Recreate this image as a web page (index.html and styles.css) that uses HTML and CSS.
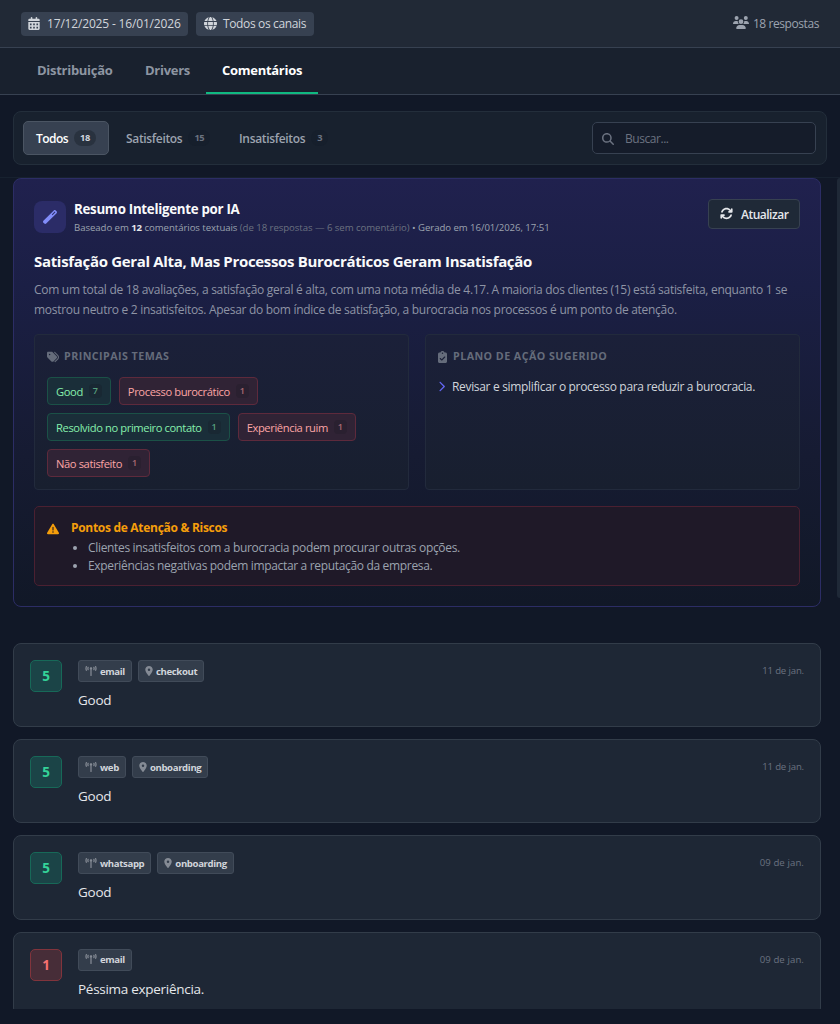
FILE: index.html
```
<!DOCTYPE html>
<html lang="pt-BR">
<head>
<meta charset="utf-8">
<title>Comentários</title>
<link rel="stylesheet" href="styles.css">
</head>
<body>
<svg class="sprite" aria-hidden="true">
  <symbol id="calendar" viewBox="0 0 448 512"><path fill-rule="evenodd" d="M128 0c17.700 0 32 14.300 32 32V64H288V32c0-17.700 14.300-32 32-32s32 14.300 32 32V64h48c26.500 0 48 21.500 48 48v48H0V112C0 85.500 21.500 64 48 64H96V32c0-17.700 14.300-32 32-32zM0 192H448V464c0 26.500-21.500 48-48 48H48c-26.500 0-48-21.500-48-48V192zM64 256v64h64v-64zM192 256v64h64v-64zM320 256v64h64v-64zM64 384v64h64v-64zM192 384v64h64v-64zM320 384v64h64v-64z"/></symbol>
  <symbol id="globe" viewBox="0 0 512 512"><path d="M352 256c0 22.200-1.200 43.600-3.300 64H163.300c-2.200-20.400-3.300-41.800-3.300-64s1.200-43.600 3.300-64H348.700c2.200 20.400 3.300 41.800 3.300 64zm28.800-64H503.900c5.300 20.500 8.100 41.900 8.100 64s-2.800 43.500-8.100 64H380.800c2.100-20.600 3.200-42 3.200-64s-1.100-43.400-3.200-64zm112.600-32H376.700c-10-63.900-29.800-117.400-55.300-151.600c78.300 20.700 142 77.500 171.900 151.600zm-149.100 0H167.700c6.100-36.400 15.500-68.600 27-94.700c10.500-23.600 22.200-40.700 33.500-51.500C239.400 3.200 248.700 0 256 0s16.600 3.200 27.800 13.800c11.300 10.800 23 27.900 33.500 51.500c11.600 26 20.900 58.200 27 94.700zm-209 0H18.600C48.600 85.900 112.200 29.100 190.600 8.400C165.100 42.600 145.300 96.100 135.300 160zM8.100 192H131.200c-2.100 20.600-3.200 42-3.200 64s1.100 43.400 3.200 64H8.100C2.800 299.500 0 278.100 0 256s2.800-43.500 8.100-64zM194.700 446.600c-11.600-26-20.900-58.200-27-94.600H344.300c-6.100 36.400-15.500 68.600-27 94.600c-10.500 23.600-22.200 40.700-33.500 51.500C272.600 508.800 263.300 512 256 512s-16.600-3.200-27.800-13.800c-11.300-10.800-23-27.900-33.500-51.500zM135.300 352c10 63.900 29.800 117.400 55.300 151.600C112.200 482.900 48.600 426.100 18.600 352H135.300zm358.100 0c-30 74.100-93.600 130.900-171.900 151.600c25.500-34.200 45.200-87.700 55.300-151.600H493.400z"/></symbol>
  <symbol id="users" viewBox="0 0 640 512"><path d="M144 0a80 80 0 1 1 0 160A80 80 0 1 1 144 0zM512 0a80 80 0 1 1 0 160A80 80 0 1 1 512 0zM0 298.700C0 239.800 47.800 192 106.700 192h42.700c15.900 0 31 3.500 44.600 9.700c-1.300 7.200-1.900 14.700-1.900 22.300c0 38.200 16.800 72.500 43.300 96H21.300C9.600 320 0 310.400 0 298.700zM405.300 320c26.600-23.500 43.300-57.800 43.300-96c0-7.600-.7-15-1.900-22.300c13.600-6.300 28.700-9.700 44.600-9.700h42.700C592.200 192 640 239.800 640 298.700c0 11.800-9.600 21.300-21.300 21.300H405.300zM224 224a96 96 0 1 1 192 0 96 96 0 1 1 -192 0zM128 485.300C128 411.700 187.700 352 261.300 352H378.700C452.300 352 512 411.700 512 485.300c0 14.700-11.900 26.700-26.700 26.700H154.700c-14.700 0-26.700-11.900-26.700-26.700z"/></symbol>
  <symbol id="search" viewBox="0 0 512 512"><path d="M416 208c0 45.900-14.900 88.300-40 122.700L502.600 457.400c12.500 12.500 12.500 32.800 0 45.300s-32.800 12.500-45.300 0L330.700 376c-34.400 25.200-76.800 40-122.700 40C93.100 416 0 322.900 0 208S93.100 0 208 0S416 93.100 416 208zM208 352a144 144 0 1 0 0-288 144 144 0 1 0 0 288z"/></symbol>
  <symbol id="sync" viewBox="0 0 512 512"><path d="M105.100 202.600c7.700-21.800 20.200-42.300 37.800-59.800c62.500-62.500 163.800-62.500 226.300 0L386.300 160H352c-17.700 0-32 14.300-32 32s14.300 32 32 32H463.900c17.700 0 32-14.300 32-32V80c0-17.700-14.300-32-32-32s-32 14.300-32 32v35.200L414.400 97.600c-87.500-87.500-229.300-87.500-316.800 0C73.200 122 55.600 150.700 44.800 181.400c-5.900 16.700 2.900 34.900 19.500 40.800s34.900-2.900 40.800-19.500zM39 289.300c-5 1.500-9.800 4.200-13.700 8.200c-4 4-6.700 8.800-8.100 14c-.3 1.200-.6 2.500-.8 3.800c-.3 1.700-.4 3.400-.4 5.100V432c0 17.700 14.300 32 32 32s32-14.300 32-32V396.900l17.600 17.500c87.500 87.400 229.300 87.400 316.700 0c24.400-24.400 42.100-53.100 52.900-83.800c5.900-16.700-2.900-34.900-19.500-40.800s-34.900 2.900-40.800 19.500c-7.700 21.800-20.200 42.300-37.800 59.800c-62.500 62.500-163.800 62.500-226.300 0L125.600 352H160c17.700 0 32-14.300 32-32s-14.300-32-32-32H48.400c-1.600 0-3.200 .1-4.800 .3s-3.100 .5-4.600 1z"/></symbol>
  <symbol id="wand" viewBox="0 0 512 512"><path d="M14.100 463.300c-18.700-18.700-18.700-49.100 0-67.900L395.400 14.100c18.700-18.700 49.100-18.700 67.900 0l34.600 34.600c18.700 18.700 18.700 49.100 0 67.900L116.500 497.900c-18.700 18.700-49.100 18.700-67.900 0L14.100 463.300zM347.600 187.600l105-105L429.400 59.300l-105 105 23.300 23.300z"/></symbol>
  <symbol id="tags" viewBox="0 0 512 512"><path d="M345 39.100L472.800 168.400c52.400 53 52.400 138.200 0 191.200L360.800 472.900c-9.300 9.400-24.500 9.500-33.900 .2s-9.500-24.500-.2-33.900L438.600 325.900c33.900-34.300 33.900-89.400 0-123.700L310.900 72.900c-9.300-9.400-9.200-24.600 .2-33.900s24.600-9.200 33.900 .2zM0 229.500V80C0 53.500 21.500 32 48 32H197.500c17 0 33.300 6.700 45.300 18.700l168 168c25 25 25 65.500 0 90.500L277.300 442.700c-25 25-65.500 25-90.500 0l-168-168C6.700 262.700 0 246.500 0 229.500zM144 144a32 32 0 1 0 -64 0 32 32 0 1 0 64 0z"/></symbol>
  <symbol id="clipboard" viewBox="0 0 384 512"><path fill-rule="evenodd" d="M192 0c-41.800 0-77.400 26.700-90.500 64H64C28.700 64 0 92.700 0 128V448c0 35.300 28.700 64 64 64H320c35.300 0 64-28.700 64-64V128c0-35.300-28.700-64-64-64H282.500C269.400 26.700 233.800 0 192 0zm0 64a32 32 0 1 1 0 64 32 32 0 1 1 0-64zM305 273L177 401c-9.400 9.400-24.600 9.400-33.900 0L79 337c-9.400-9.400-9.400-24.600 0-33.900s24.600-9.400 33.900 0l47 47L271 239c9.400-9.400 24.600-9.400 33.900 0s9.400 24.600 0 33.900z"/></symbol>
  <symbol id="chevron" viewBox="0 0 320 512"><path d="M310.600 233.400c12.500 12.500 12.500 32.800 0 45.300l-192 192c-12.500 12.500-32.800 12.500-45.300 0s-12.500-32.800 0-45.300L242.700 256 73.400 86.600c-12.500-12.500-12.500-32.800 0-45.300s32.800-12.500 45.300 0l192 192z"/></symbol>
  <symbol id="warning" viewBox="0 0 512 512"><path fill-rule="evenodd" d="M256 32c14.200 0 27.300 7.500 34.500 19.800l216 368c7.300 12.400 7.300 27.700 .2 40.100S486.300 480 472 480H40c-14.300 0-27.600-7.700-34.700-20.100s-7-27.800 .2-40.100l216-368C228.700 39.500 241.800 32 256 32zm0 128c-13.300 0-24 10.700-24 24V296c0 13.300 10.700 24 24 24s24-10.700 24-24V184c0-13.300-10.700-24-24-24zm32 224a32 32 0 1 0 -64 0 32 32 0 1 0 64 0z"/></symbol>
  <symbol id="pin" viewBox="0 0 384 512"><path fill-rule="evenodd" d="M215.700 499.200C267 435 384 279.400 384 192C384 86 298 0 192 0S0 86 0 192c0 87.400 117 243 168.300 307.200c12.300 15.300 35.100 15.300 47.400 0zM192 128a64 64 0 1 1 0 128 64 64 0 1 1 0-128z"/></symbol>
  <symbol id="tower" viewBox="0 0 576 512"><path d="M80.300 44C69.800 69.900 64 98.200 64 128s5.800 58.100 16.300 84c6.600 16.400-1.300 35-17.700 41.700s-35-1.300-41.700-17.700C7.400 202.600 0 166.100 0 128S7.400 53.400 20.900 20C27.600 3.600 46.200-4.300 62.600 2.300S86.900 27.600 80.300 44zM555.100 20C568.600 53.400 576 89.900 576 128s-7.400 74.600-20.900 108c-6.600 16.400-25.300 24.300-41.700 17.700S489.100 228.400 495.700 212c10.500-25.900 16.300-54.200 16.300-84s-5.800-58.100-16.300-84C489.100 27.600 497 9 513.400 2.300s35 1.300 41.700 17.700zM352 128c0 23.700-12.900 44.400-32 55.400V480c0 17.700-14.300 32-32 32s-32-14.300-32-32V183.400c-19.100-11.100-32-31.700-32-55.400c0-35.300 28.700-64 64-64s64 28.700 64 64zM170.600 76.800C163.800 92.400 160 109.700 160 128s3.800 35.600 10.600 51.200c7.100 16.200-.3 35.100-16.500 42.100s-35.100-.3-42.100-16.500c-10.300-23.600-16-49.600-16-76.800s5.700-53.200 16-76.800c7.100-16.200 25.900-23.600 42.100-16.500s23.600 25.900 16.500 42.100zM464 51.200c10.300 23.600 16 49.600 16 76.800s-5.700 53.200-16 76.800c-7.100 16.200-25.900 23.600-42.100 16.500s-23.600-25.900-16.500-42.100c6.800-15.600 10.600-32.900 10.600-51.200s-3.800-35.600-10.600-51.200c-7.100-16.200 .3-35.100 16.500-42.100s35.100 .3 42.100 16.500z"/></symbol>
</svg>

<header class="topbar">
  <div class="pill pill-date"><svg class="ic ic-cal"><use href="#calendar"/></svg><span>17/12/2025 - 16/01/2026</span></div>
  <div class="pill pill-channel"><svg class="ic ic-globe"><use href="#globe"/></svg><span>Todos os canais</span></div>
  <div class="total"><svg class="ic ic-users"><use href="#users"/></svg><span>18 respostas</span></div>
</header>

<nav class="tabs">
  <a class="tab tab-dist">Distribuição</a>
  <a class="tab tab-drivers">Drivers</a>
  <a class="tab tab-active">Comentários</a>
</nav>

<section class="filters">
  <button class="filter filter-on"><span>Todos</span><b>18</b></button>
  <button class="filter filter-sat"><span>Satisfeitos</span><b>15</b></button>
  <button class="filter filter-ins"><span>Insatisfeitos</span><b>3</b></button>
  <div class="search"><svg class="ic ic-search"><use href="#search"/></svg><span>Buscar...</span></div>
</section>

<main class="scroller">
  <div class="content">
    <section class="ai">
      <div class="ai-head">
        <div class="ai-icon"><svg class="ic ic-wand"><use href="#wand"/></svg></div>
        <div class="ai-titles">
          <h2>Resumo Inteligente por IA</h2>
          <p>Baseado em <b>12</b> comentários textuais <span>(de 18 respostas — 6 sem comentário)</span> • Gerado em 16/01/2026, 17:51</p>
        </div>
        <button class="refresh"><svg class="ic ic-sync"><use href="#sync"/></svg><span>Atualizar</span></button>
      </div>
      <h3>Satisfação Geral Alta, Mas Processos Burocráticos Geram Insatisfação</h3>
      <p class="summary"><span>Com um total de 18 avaliações, a satisfação geral é alta, com uma nota média de 4.17. A maioria dos clientes (15) está satisfeita, enquanto 1 se</span><br><span>mostrou neutro e 2 insatisfeitos. Apesar do bom índice de satisfação, a burocracia nos processos é um ponto de atenção.</span></p>
      <div class="grid">
        <div class="box">
          <h4><svg class="ic ic-tags"><use href="#tags"/></svg><span>PRINCIPAIS TEMAS</span></h4>
          <div class="themes">
            <div class="theme good"><span>Good</span><b>7</b></div>
            <div class="theme bad"><span>Processo burocrático</span><b>1</b></div>
            <div class="theme good"><span>Resolvido no primeiro contato</span><b>1</b></div>
            <div class="theme bad"><span>Experiência ruim</span><b>1</b></div>
            <div class="theme bad"><span>Não satisfeito</span><b>1</b></div>
          </div>
        </div>
        <div class="box">
          <h4><svg class="ic ic-clip"><use href="#clipboard"/></svg><span>PLANO DE AÇÃO SUGERIDO</span></h4>
          <div class="action"><svg class="ic ic-chev"><use href="#chevron"/></svg><span>Revisar e simplificar o processo para reduzir a burocracia.</span></div>
        </div>
      </div>
      <div class="risks">
        <svg class="ic ic-warn"><use href="#warning"/></svg>
        <div>
          <h5>Pontos de Atenção &amp; Riscos</h5>
          <ul>
            <li>Clientes insatisfeitos com a burocracia podem procurar outras opções.</li>
            <li>Experiências negativas podem impactar a reputação da empresa.</li>
          </ul>
        </div>
      </div>
    </section>

    <div class="comments">
      <article class="comment">
        <div class="score high">5</div>
        <div class="body">
          <div class="meta"><span class="tag"><svg class="ic ic-tower"><use href="#tower"/></svg>email</span><span class="tag"><svg class="ic ic-pin"><use href="#pin"/></svg>checkout</span></div>
          <p>Good</p>
        </div>
        <time>11 de jan.</time>
      </article>
      <article class="comment">
        <div class="score high">5</div>
        <div class="body">
          <div class="meta"><span class="tag"><svg class="ic ic-tower"><use href="#tower"/></svg>web</span><span class="tag"><svg class="ic ic-pin"><use href="#pin"/></svg>onboarding</span></div>
          <p>Good</p>
        </div>
        <time>11 de jan.</time>
      </article>
      <article class="comment">
        <div class="score high">5</div>
        <div class="body">
          <div class="meta"><span class="tag"><svg class="ic ic-tower"><use href="#tower"/></svg>whatsapp</span><span class="tag"><svg class="ic ic-pin"><use href="#pin"/></svg>onboarding</span></div>
          <p>Good</p>
        </div>
        <time class="wide">09 de jan.</time>
      </article>
      <article class="comment">
        <div class="score low">1</div>
        <div class="body">
          <div class="meta"><span class="tag"><svg class="ic ic-tower"><use href="#tower"/></svg>email</span></div>
          <p>Péssima experiência.</p>
        </div>
        <time class="wide">09 de jan.</time>
      </article>
    </div>
  </div>
  <div class="scrollbar"></div>
</main>
</body>
</html>
```
FILE: styles.css
```
* { box-sizing: border-box; }
body {
  margin: 0;
  width: 840px;
  height: 1024px;
  overflow: hidden;
  background: #111827;
  color: #f9fafb;
  font-family: "Open Sans", "Noto Sans", sans-serif;
  font-size: 12px;
  white-space: nowrap;
}
h2, h3, h4, h5, p, ul { margin: 0; }
button { font: inherit; color: inherit; background: none; }
.sprite { position: absolute; width: 0; height: 0; }
.ic { display: block; flex: none; fill: currentColor; }

/* Top bar */
.topbar {
  display: flex;
  align-items: center;
  gap: 8px;
  height: 48px;
  padding: 0 21px;
  background: #212936;
  border-bottom: 1px solid #374151;
}
.pill {
  display: flex;
  align-items: center;
  height: 24px;
  padding: 0 8px 0 7px;
  border-radius: 4px;
  background: #374151;
  color: #d1d5db;
  line-height: 24px;
}
.pill-date { width: 167px; letter-spacing: -0.17px; }
.pill-channel { width: 118px; letter-spacing: -0.36px; }
.ic-cal { width: 12px; height: 13px; margin-right: 7px; }
.ic-globe { width: 13px; height: 13px; margin: 0 6px 0 1px; }
.total {
  display: flex;
  align-items: center;
  margin-left: auto;
  color: #9ca3af;
  letter-spacing: -0.42px;
}
.ic-users { width: 16px; height: 13px; margin: -2px 4px 0 0; }

/* Tabs */
.tabs {
  display: flex;
  height: 47px;
  padding-left: 21px;
  background: #19212e;
  border-bottom: 1px solid #374151;
}
.tab {
  height: 46px;
  padding: 0 16px;
  border-bottom: 2px solid transparent;
  color: #8d95a2;
  font-size: 13px;
  font-weight: 700;
  line-height: 45px;
  letter-spacing: -0.28px;
}
.tab-dist { width: 108px; }
.tab-drivers { width: 77px; }
.tab-active { width: 112px; color: #fff; border-color: #10b981; }

/* Filters */
.filters {
  display: flex;
  align-items: center;
  height: 54px;
  margin: 16px 13px 12px;
  padding: 0 10px 0 9px;
  border: 1px solid #232e3b;
  border-radius: 8px;
  background: #18212e;
}
.filter {
  display: flex;
  align-items: center;
  gap: 6px;
  height: 34px;
  padding: 0 12px;
  border: 1px solid transparent;
  border-radius: 5px;
  color: #9ca3af;
  font-size: 12px;
  font-weight: 600;
  letter-spacing: -0.33px;
}
.filter b {
  height: 16px;
  padding: 0 6px;
  border-radius: 8px;
  background: #161f2c;
  color: #6b7280;
  font-size: 9.3px;
  font-weight: 700;
  line-height: 16px;
  letter-spacing: -0.4px;
}
.filter-on { width: 86px; margin-right: 4px; background: #374151; border-color: #4b5563; color: #fff; letter-spacing: -0.55px; }
.filter-on b { background: #29323f; color: #d1d5db; }
.filter-sat { width: 109px; margin-right: 4px; }
.search {
  display: flex;
  align-items: center;
  width: 224px;
  height: 32px;
  margin-left: auto;
  padding-left: 9px;
  border: 1px solid #374151;
  border-radius: 5px;
  background: #151c2a;
  color: #6b7280;
  letter-spacing: -0.45px;
}
.ic-search { width: 12px; height: 12px; margin: 2px 11px 0 0; }

/* Scrolling list */
.scroller {
  display: flex;
  justify-content: space-between;
  height: 832px;
  overflow: hidden;
  border-top: 1px solid #17212f;
}
.content { width: 808px; margin-left: 13px; }
.scrollbar { width: 3px; height: 420px; background: #1f2937; border-radius: 3px 0 0 3px; }

/* AI summary */
.ai {
  height: 429px;
  padding: 20px;
  border: 1px solid #2c2d65;
  border-radius: 8px;
  background: linear-gradient(180deg, #20214e 0%, #1b1f45 25%, #161b32 65%, #111827 100%);
}
.ai-head { display: flex; height: 34px; }
.ai-icon {
  display: grid;
  place-items: center;
  width: 32px;
  height: 32px;
  margin: 2px 8px 0 0;
  border-radius: 8px;
  background: #2b2c67;
  color: #818cf8;
}
.ic-wand { width: 14px; height: 14px; }
.ai-titles h2 { font-size: 13.3px; font-weight: 700; line-height: 20px; letter-spacing: -0.28px; }
.ai-titles p { color: #9ca3af; font-size: 9.6px; line-height: 17px; letter-spacing: -0.05px; }
.ai-titles b { color: #e5e7eb; }
.ai-titles span { color: #6b7280; }
.refresh {
  display: flex;
  align-items: center;
  width: 92px;
  height: 30px;
  margin-left: auto;
  padding: 0 11px;
  border: 1px solid #374151;
  border-radius: 4px;
  background: #1f2937;
  color: #e5e7eb;
  font-weight: 600;
  letter-spacing: -0.5px;
}
.ic-sync { width: 13px; height: 13px; margin: -2px 8px 0 0; }
.ai h3 { margin-top: 17px; font-size: 15px; font-weight: 700; line-height: 23px; letter-spacing: -0.32px; }
.summary { height: 40px; margin-top: 7px; color: #8e94a5; font-size: 12px; line-height: 20px; letter-spacing: -0.29px; }
.grid { display: grid; grid-template-columns: 375px 375px; gap: 16px; margin-top: 14px; }
.box {
  height: 156px;
  padding: 12px;
  border: 1px solid #222a3c;
  border-radius: 4px;
  background: linear-gradient(180deg, #1b2039, #181f2f);
}
.box h4 {
  display: flex;
  align-items: center;
  height: 18px;
  color: #656c7b;
  font-size: 10.7px;
  font-weight: 700;
  letter-spacing: 0.45px;
}
.ic-tags { width: 12px; height: 12px; margin: 1px 5px 0 0; }
.ic-clip { width: 9px; height: 12px; margin: 1px 6px 0 0; }
.themes { display: flex; flex-wrap: wrap; gap: 8px; margin-top: 12px; }
.theme {
  display: flex;
  align-items: center;
  gap: 6px;
  height: 28px;
  padding: 0 8px;
  border: 1px solid;
  border-radius: 4px;
  font-size: 11.2px;
  font-weight: 500;
  letter-spacing: -0.4px;
}
.theme b {
  width: 13px;
  height: 14px;
  border-radius: 4px;
  font-size: 9px;
  font-weight: 600;
  line-height: 14px;
  letter-spacing: 0;
  text-align: center;
}
.good { background: #1a2e39; border-color: #1b5147; color: #86efac; }
.good b { background: #192833; color: #58a17f; }
.bad { background: #302335; border-color: #5e2a3c; color: #fca5a5; }
.bad b { background: #2a2030; color: #ab6c74; }
.action { display: flex; align-items: center; height: 20px; margin-top: 11px; color: #d1d5db; font-size: 12px; letter-spacing: -0.33px; }
.ic-chev { width: 7px; height: 11px; margin: 1px 7px 0 0; color: #6366f1; }
.risks {
  display: flex;
  height: 80px;
  margin-top: 16px;
  padding: 12px;
  border: 1px solid #4b2031;
  border-radius: 5px;
  background: #1f1928;
}
.ic-warn { width: 12px; height: 12px; margin: 4px 12px 0 0; color: #f59e0b; }
.risks h5 { color: #f59e0b; font-size: 12px; font-weight: 700; line-height: 18px; letter-spacing: -0.3px; }
.risks ul { padding-left: 17px; margin-top: 2px; color: #9ca3af; font-size: 12px; line-height: 18px; letter-spacing: -0.33px; }

/* Comments */
.comments { display: flex; flex-direction: column; gap: 12px; margin-top: 36px; }
.comment {
  display: flex;
  height: 84.2px;
  flex: none;
  padding: 16px;
  border: 1px solid #323c49;
  border-radius: 8px;
  background: #1e2735;
}
.score {
  width: 32px;
  height: 32px;
  margin-right: 16px;
  border: 1px solid;
  border-radius: 5px;
  font-size: 13.5px;
  font-weight: 700;
  line-height: 30px;
  text-align: center;
}
.high { background: #1b4447; border-color: #176958; color: #34d399; }
.low { background: #472d38; border-color: #81343c; color: #f87171; }
.meta { display: flex; gap: 6px; height: 22px; }
.tag {
  display: flex;
  align-items: center;
  gap: 3px;
  height: 22px;
  padding: 0 6px;
  border: 1px solid #414b59;
  border-radius: 3px;
  background: #333d4b;
  color: #d1d5db;
  font-size: 9.6px;
  font-weight: 700;
  letter-spacing: -0.36px;
}
.tag svg { color: #858b95; }
.ic-tower { width: 12px; height: 10px; margin-top: -1px; }
.ic-pin { width: 8px; height: 10px; margin-top: -1px; }
.body p { margin-top: 7px; color: #e5e7eb; font-size: 13.5px; line-height: 22px; letter-spacing: -0.28px; }
.comment time { margin-left: auto; color: #6b7280; font-size: 9.6px; line-height: 21px; letter-spacing: -0.15px; }
.comment time.wide { letter-spacing: 0.1px; }
```
